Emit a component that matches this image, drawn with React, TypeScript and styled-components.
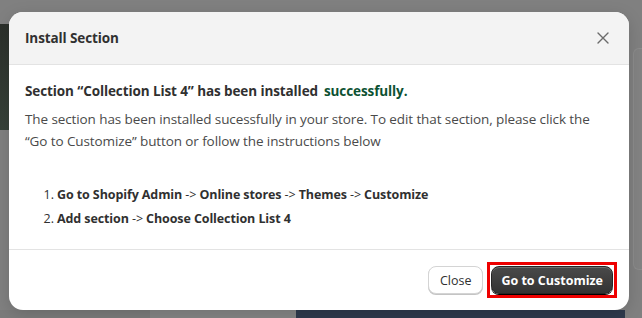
import React from 'react';
import styled, { createGlobalStyle } from 'styled-components';

const GlobalStyle = createGlobalStyle`
  html, body {
    margin: 0;
    padding: 0;
    width: 642px;
    height: 318px;
    overflow: hidden;
    background: #808080;
    font-family: "Open Sans", "Noto Sans", Arial, sans-serif;
  }
  * { box-sizing: border-box; }
`;

const Screen = styled.div`
  position: relative;
  width: 642px;
  height: 318px;
  background: #808080;
  overflow: hidden;
`;

// faded page behind the overlay
const PageBehind = styled.div`
  display: grid;
  grid-template-columns: 150px 146px 329px 1fr;
  grid-template-rows: 24px 106px 1fr 8px;
  width: 100%;
  height: 100%;
`;

const Thumb = styled.div`
  grid-column: 1;
  grid-row: 2;
  background: linear-gradient(135deg, #2b2f2a 0%, #3c4a40 60%, #23272c 100%);
`;

const BottomBlock = styled.div<{ $tone: string }>`
  grid-row: 4;
  background: ${(p) => p.$tone};
`;

const SidePanel = styled.div`
  grid-column: 4;
  grid-row: 2 / 4;
  margin: 24px 0 40px 8px;
  border: 1px solid #8c8c8c;
  border-right: none;
  border-radius: 6px 0 0 6px;
  background: #838383;
`;

const Modal = styled.div`
  position: absolute;
  left: 9px;
  top: 12px;
  width: 620px;
  height: 298px;
  background: #fff;
  border-radius: 14px;
  overflow: hidden;
  display: flex;
  flex-direction: column;
  box-shadow: 0 4px 16px rgba(0, 0, 0, 0.15);
`;

const Header = styled.div`
  height: 53px;
  flex: none;
  display: flex;
  align-items: center;
  justify-content: space-between;
  padding: 0 18px 0 16px;
  background: #f3f3f3;
  border-bottom: 1px solid #e3e3e3;
`;

const Title = styled.h2`
  margin: 0;
  font-size: 13.5px;
  font-weight: 700;
  color: #303030;
  letter-spacing: -0.1px;
`;

const CloseIcon = styled.button`
  border: none;
  background: none;
  padding: 0;
  width: 16px;
  height: 16px;
  display: flex;
  align-items: center;
  justify-content: center;
  cursor: pointer;
`;

const Body = styled.div`
  flex: 1;
  padding: 16px 16px 0;
  color: #303030;
`;

const Lead = styled.p`
  margin: 0;
  font-size: 13.5px;
  line-height: 20px;
  font-weight: 700;
  letter-spacing: -0.1px;
`;

const Success = styled.span`
  color: #0c5132;
  margin-left: 6px;
`;

const Text = styled.p`
  margin: 7px 0 0;
  font-size: 13.5px;
  line-height: 22px;
  color: #4a4a4a;
  letter-spacing: -0.1px;
`;

const Steps = styled.ol`
  margin: 31px 0 0;
  padding-left: 32px;
  font-size: 12.5px;
  line-height: 24px;
  color: #303030;
  letter-spacing: -0.1px;
`;

const Footer = styled.div`
  height: 61px;
  flex: none;
  display: flex;
  align-items: center;
  justify-content: flex-end;
  gap: 4px;
  padding: 0 12px 0 16px;
  border-top: 1px solid #e3e3e3;
`;

const Highlight = styled.span`
  display: inline-flex;
  border: 3px solid #ee0000;
  padding: 1px;
`;

const Button = styled.button<{ $primary?: boolean }>`
  height: 28px;
  border-radius: 8px;
  font-family: inherit;
  font-size: 12.5px;
  cursor: pointer;
  ${(p) =>
    p.$primary
      ? `
    padding: 0 9px;
    background: linear-gradient(#4a4a4a, #333333);
    border: 1px solid #262626;
    color: #fff;
    font-weight: 700;
    box-shadow: inset 0 1px 0 rgba(255,255,255,0.2), 0 1px 0 #000;
  `
      : `
    padding: 0 11px;
    background: #fff;
    border: 1px solid #d4d4d4;
    color: #303030;
    font-weight: 400;
    box-shadow: 0 1px 0 #c4c4c4;
  `}
`;

export default function App() {
  return (
    <Screen>
      <GlobalStyle />
      <PageBehind>
        <Thumb />
        <SidePanel />
        <BottomBlock $tone="#7b7b7b" style={{ gridColumn: 1 }} />
        <BottomBlock $tone="#858585" style={{ gridColumn: 2 }} />
        <BottomBlock $tone="#2f3a4d" style={{ gridColumn: 3 }} />
        <BottomBlock $tone="#808080" style={{ gridColumn: 4 }} />
      </PageBehind>
      <Modal>
        <Header>
          <Title>Install Section</Title>
          <CloseIcon aria-label="Close">
            <svg width="12" height="12" viewBox="0 0 12 12">
              <path d="M1 1L11 11M11 1L1 11" stroke="#6b6b6b" strokeWidth="1.4" strokeLinecap="round" />
            </svg>
          </CloseIcon>
        </Header>
        <Body>
          <Lead>
            Section “Collection List 4” has been installed
            <Success>successfully.</Success>
          </Lead>
          <Text>
            The section has been installed sucessfully in your store. To edit that section, please click the
            “Go to Customize” button or follow the instructions below
          </Text>
          <Steps>
            <li>
              <b>Go to Shopify Admin</b> -&gt; <b>Online stores</b> -&gt; <b>Themes</b> -&gt; <b>Customize</b>
            </li>
            <li>
              <b>Add section</b> -&gt; <b>Choose Collection List 4</b>
            </li>
          </Steps>
        </Body>
        <Footer>
          <Button>Close</Button>
          <Highlight>
            <Button $primary>Go to Customize</Button>
          </Highlight>
        </Footer>
      </Modal>
    </Screen>
  );
}
